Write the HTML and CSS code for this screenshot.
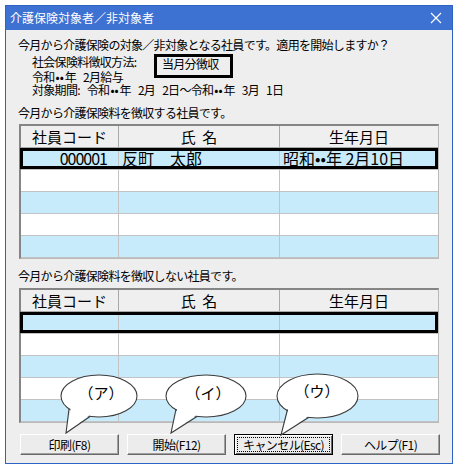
FILE: index.html
```html
<!DOCTYPE html>
<html lang="ja">
<head>
<meta charset="utf-8">
<title>介護保険対象者／非対象者</title>
<link rel="stylesheet" href="styles.css">
</head>
<body>
<div class="window">
  <div class="titlebar">
    <span class="title">介護保険対象者／非対象者</span>
    <svg class="close" width="12" height="12" viewBox="0 0 12 12"><path d="M1 1 L11 11 M11 1 L1 11" stroke="#fff" stroke-width="1.2" fill="none"/></svg>
  </div>
  <div class="content">
    <p class="line l1">今月から介護保険の対象／非対象となる社員です。適用を開始しますか？</p>
    <div class="l2">
      <span class="lbl">社会保険料徴収方法:</span>
      <span class="box">当月分徴収</span>
    </div>
    <p class="line l3">令和<span class="dots">••</span>年 2月給与</p>
    <p class="line l4">対象期間: 令和<span class="dots">••</span>年 2月 2日～令和<span class="dots">••</span>年 3月 1日</p>
    <p class="line l5">今月から介護保険料を徴収する社員です。</p>
    <div class="grid g1">
      <div class="row head"><div class="c c1">社員コード</div><div class="c c2">氏&nbsp;&nbsp;名</div><div class="c c3">生年月日</div></div>
      <div class="row blue sel"><div class="c c1 num">000001</div><div class="c c2">反町　太郎</div><div class="c c3">昭和••年 2月10日</div></div>
      <div class="row"><div class="c c1"></div><div class="c c2"></div><div class="c c3"></div></div>
      <div class="row blue"><div class="c c1"></div><div class="c c2"></div><div class="c c3"></div></div>
      <div class="row"><div class="c c1"></div><div class="c c2"></div><div class="c c3"></div></div>
      <div class="row blue"><div class="c c1"></div><div class="c c2"></div><div class="c c3"></div></div>
    </div>
    <p class="line l6">今月から介護保険料を徴収しない社員です。</p>
    <div class="grid g2">
      <div class="row head"><div class="c c1">社員コード</div><div class="c c2">氏&nbsp;&nbsp;名</div><div class="c c3">生年月日</div></div>
      <div class="row blue sel"><div class="c c1"></div><div class="c c2"></div><div class="c c3"></div></div>
      <div class="row"><div class="c c1"></div><div class="c c2"></div><div class="c c3"></div></div>
      <div class="row blue"><div class="c c1"></div><div class="c c2"></div><div class="c c3"></div></div>
      <div class="row"><div class="c c1"></div><div class="c c2"></div><div class="c c3"></div></div>
      <div class="row blue"><div class="c c1"></div><div class="c c2"></div><div class="c c3"></div></div>
    </div>
    <div class="buttons">
      <button class="btn">印刷(F8)</button>
      <button class="btn">開始(F12)</button>
      <button class="btn focus">キャンセル(Esc)</button>
      <button class="btn">ヘルプ(F1)</button>
    </div>
  </div>
</div>
<svg class="bubbles" width="462" height="469" viewBox="0 0 462 469">
  <g class="bubble">
    <ellipse cx="99" cy="396" rx="38" ry="21"/>
    <polygon class="tailfill" points="71,407 91,414 66,433"/>
    <polyline class="tail" points="69,409 66,433 90,416.5"/>
    <text x="101" y="399">（ア）</text>
  </g>
  <g class="bubble">
    <ellipse cx="206" cy="396" rx="40" ry="21"/>
    <polygon class="tailfill" points="178,407 198,414 171,433"/>
    <polyline class="tail" points="176,409 171,433 197,416.5"/>
    <text x="208" y="399">（イ）</text>
  </g>
  <g class="bubble">
    <ellipse cx="317.5" cy="396" rx="40.5" ry="22"/>
    <polygon class="tailfill" points="289,407 310,415 281,435"/>
    <polyline class="tail" points="287.5,409.5 281,435 308.5,417.5"/>
    <text x="317" y="397">（ウ）</text>
  </g>
</svg>
</body>
</html>
```
FILE: styles.css
```css
html, body {
  margin: 0;
  padding: 0;
  background: #ffffff;
}
body {
  position: relative;
  width: 462px;
  height: 469px;
  overflow: hidden;
  font-family: "Noto Sans CJK JP", "Noto Sans", sans-serif;
  color: #000;
}
.window {
  position: relative;
  margin: 5px 0 0 5px;
  width: 448px;
  height: 459px;
  box-sizing: border-box;
  border: 1px solid #2e63c6;
  background: #eeeeee;
  display: flex;
  flex-direction: column;
}
.titlebar {
  height: 24px;
  background: #3d71d2;
  display: flex;
  align-items: center;
  justify-content: space-between;
  padding: 0 10px 0 4px;
  flex: none;
}
.title {
  color: #fff;
  font-size: 12px;
  line-height: 14px;
  margin-top: -1px;
}
.close {
  display: block;
  margin-top: -1px;
}
.content {
  padding: 8px 0 0 12px;
}
.line {
  margin: 0;
  font-size: 12px;
  line-height: 13px;
  letter-spacing: -0.7px;
  white-space: pre;
}
.l2 {
  display: flex;
  align-items: flex-start;
  margin: 3px 0 0 14px;
  height: 17px;
  font-size: 12px;
  line-height: 12px;
  letter-spacing: -0.7px;
  white-space: nowrap;
}
.lbl {
  width: 122px;
  margin-top: 2px;
}
.box {
  width: 79px;
  height: 24px;
  box-sizing: border-box;
  border: 3px solid #000;
  padding: 1px 0 0 5px;
  background: #eeeeee;
  position: relative;
}
.l3 {
  margin-left: 14px;
  line-height: 12px;
  word-spacing: 5px;
}
.l4 {
  margin-left: 14px;
  word-spacing: 5px;
}
.dots {
  letter-spacing: 0;
  padding: 0 1px;
}
.l5 {
  margin-top: 10px;
}
.l6 {
  margin-top: 10px;
}
.grid {
  margin: 5px 0 0 1px;
  width: 420px;
  box-sizing: border-box;
  border-style: solid;
  border-width: 2px 1px 1px 2px;
  border-color: #858585 #b9b9b9 #b9b9b9 #858585;
  background: #fff;
}
.g2 {
  margin-top: 6px;
}
.row {
  display: flex;
  height: 21px;
  border-bottom: 1px solid #c3c3c3;
  background: #ffffff;
  position: relative;
}
.row.blue {
  background: #c8ebfb;
}
.row.head {
  background: #efefef;
  border-bottom-color: #a9a9a9;
}
.c {
  box-sizing: border-box;
  border-right: 1px solid #c3c3c3;
  font-size: 16px;
  line-height: 21px;
  white-space: nowrap;
}
.head .c {
  border-right-color: #a9a9a9;
  font-size: 15px;
  text-align: center;
  letter-spacing: 0;
}
.c1 { width: 98px; flex: none; }
.c2 { width: 161px; flex: none; padding-left: 3px; }
.c3 { flex: 1; border-right: none; padding-left: 3px; }
.head .c2, .head .c3 { padding-left: 0; }
.num {
  text-align: right;
  padding-right: 11px;
  letter-spacing: -1px;
}
.sel::after {
  content: "";
  position: absolute;
  top: 0;
  bottom: 0;
  left: -1px;
  right: 0;
  border: 3px solid #000;
  pointer-events: none;
}
.buttons {
  display: flex;
  gap: 8px;
  margin: 11px 0 0 2px;
}
.btn {
  width: 99px;
  height: 21px;
  box-sizing: border-box;
  padding: 0;
  margin: 0;
  font-family: "Noto Sans CJK JP", "Noto Sans", sans-serif;
  font-size: 12px;
  line-height: 17px;
  letter-spacing: -0.6px;
  color: #000;
  background: #ececec;
  border: 1px solid;
  border-color: #ffffff #696969 #696969 #ffffff;
  box-shadow: inset -1px -1px 0 #a0a0a0;
  white-space: nowrap;
}
.btn.focus {
  border-color: #000;
  box-shadow: inset 1px 1px 0 #fff, inset -1px -1px 0 #696969;
  outline: 1px dotted #000;
  outline-offset: -4px;
}
.bubbles {
  position: absolute;
  left: 0;
  top: 0;
  pointer-events: none;
}
.bubble ellipse {
  fill: #fff;
  stroke: #3c3c3c;
  stroke-width: 1.1;
}
.bubble .tailfill {
  fill: #fff;
  stroke: none;
}
.bubble .tail {
  fill: none;
  stroke: #3c3c3c;
  stroke-width: 1.1;
}
.bubble text {
  font-family: "Noto Sans CJK JP", "Noto Sans", sans-serif;
  font-size: 15px;
  text-anchor: middle;
  fill: #000;
}
```
